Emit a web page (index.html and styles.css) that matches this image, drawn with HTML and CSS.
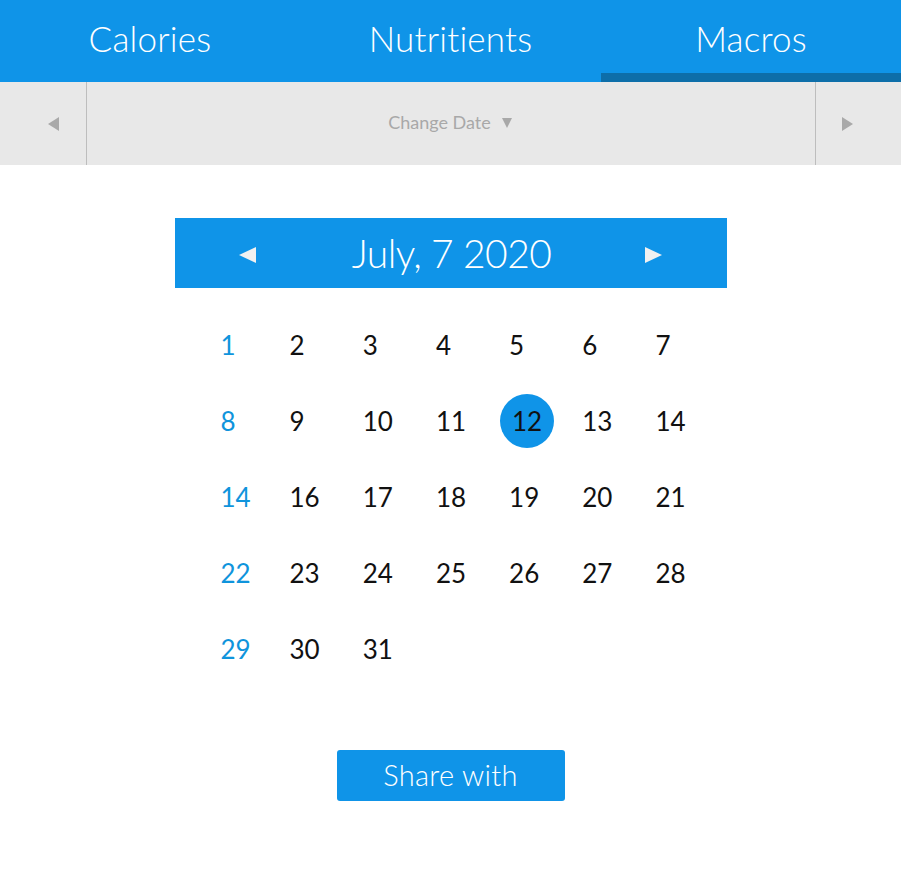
FILE: index.html
```html
<!DOCTYPE html>
<html>
<head>
<meta charset="utf-8">
<link rel="stylesheet" href="styles.css">
</head>
<body>
<nav class="tabs">
  <div class="tab">Calories</div>
  <div class="tab">Nutritients</div>
  <div class="tab active">Macros</div>
</nav>
<div class="datebar">
  <div class="side left"><span class="tri-left"></span></div>
  <div class="center">Change Date <span class="caret"></span></div>
  <div class="side right"><span class="tri-right"></span></div>
</div>
<main class="content">
  <section class="calendar">
    <div class="cal-head">
      <span class="arrow arrow-left"></span>
      <span class="title">July, 7 2020</span>
      <span class="arrow arrow-right"></span>
    </div>
    <div class="days">
      <span class="day sun">1</span><span class="day">2</span><span class="day">3</span><span class="day">4</span><span class="day">5</span><span class="day">6</span><span class="day">7</span>
      <span class="day sun">8</span><span class="day">9</span><span class="day">10</span><span class="day">11</span><span class="day"><span class="sel">12</span></span><span class="day">13</span><span class="day">14</span>
      <span class="day sun">14</span><span class="day">16</span><span class="day">17</span><span class="day">18</span><span class="day">19</span><span class="day">20</span><span class="day">21</span>
      <span class="day sun">22</span><span class="day">23</span><span class="day">24</span><span class="day">25</span><span class="day">26</span><span class="day">27</span><span class="day">28</span>
      <span class="day sun">29</span><span class="day">30</span><span class="day">31</span>
    </div>
  </section>
  <button class="share">Share with</button>
</main>
</body>
</html>
```
FILE: styles.css
```css
* { box-sizing: border-box; }
html, body { margin: 0; padding: 0; background: #fff; }
body { font-family: Lato, "Open Sans", sans-serif; width: 901px; }

.tabs {
  display: grid;
  grid-template-columns: 300px 301px 300px;
  height: 82px;
  background: #0f94e8;
}
.tab {
  color: #fff;
  font-size: 35px;
  font-weight: 300;
  display: flex;
  justify-content: center;
  align-items: center;
  padding-bottom: 6px;
  letter-spacing: 0.2px;
}
.tab.active { border-bottom: 9px solid #0d6ea9; padding-bottom: 0; padding-top: 3px; }

.datebar {
  display: grid;
  grid-template-columns: 87px 1fr 86px;
  height: 83px;
  background: #e8e8e8;
}
.side { display: flex; align-items: center; justify-content: center; }
.side.left { border-right: 1px solid #bdbdbd; }
.side.right { border-left: 1px solid #bdbdbd; }
.tri-left { width: 0; height: 0; border-top: 7px solid transparent; border-bottom: 7px solid transparent; border-right: 11px solid #a9a9a9; margin-left: 21px; }
.tri-right { width: 0; height: 0; border-top: 7px solid transparent; border-bottom: 7px solid transparent; border-left: 11px solid #a9a9a9; margin-right: 22px; }
.center {
  display: flex; align-items: center; justify-content: center;
  color: #a8a8a8; font-size: 18px; gap: 11px; padding-right: 2px; padding-bottom: 4px;
}
.caret { width: 0; height: 0; border-left: 5px solid transparent; border-right: 5px solid transparent; border-top: 10px solid #a8a8a8; margin-top: 2px; }

.content { display: flex; flex-direction: column; align-items: center; padding-top: 53px; }
.calendar { width: 552px; }
.cal-head {
  height: 70px;
  background: #0f94e8;
  display: flex;
  align-items: center;
  justify-content: space-between;
  padding: 0 64px 0 64px;
}
.title { color: #fff; font-size: 39px; font-weight: 300; letter-spacing: -0.6px; padding-left: 2px; }
.arrow { width: 0; height: 0; border-top: 8px solid transparent; border-bottom: 8px solid transparent; margin-top: 4px; }
.arrow-left { border-right: 17px solid #f1f1f1; }
.arrow-right { border-left: 17px solid #f1f1f1; }

.days {
  display: grid;
  grid-template-columns: 69px repeat(6, 73.2px);
  grid-auto-rows: 76px;
  margin: 19px 0 0 46px;
}
.day {
  display: flex; align-items: center;
  font-size: 26px; color: #111;
}
.day.sun { color: #0f94dc; }
.sel {
  width: 54px; height: 54px; border-radius: 50%;
  background: #0f94e8;
  display: flex; align-items: center; justify-content: center;
  margin-left: -9px;
}

.share {
  margin-top: 63px;
  width: 228px; height: 51px;
  background: #0f94e8; color: #fff;
  border: none; border-radius: 3px;
  font-family: Lato, sans-serif; font-size: 29px; font-weight: 300;
  letter-spacing: 0.3px;
  padding: 0 0 3px;
}
```
